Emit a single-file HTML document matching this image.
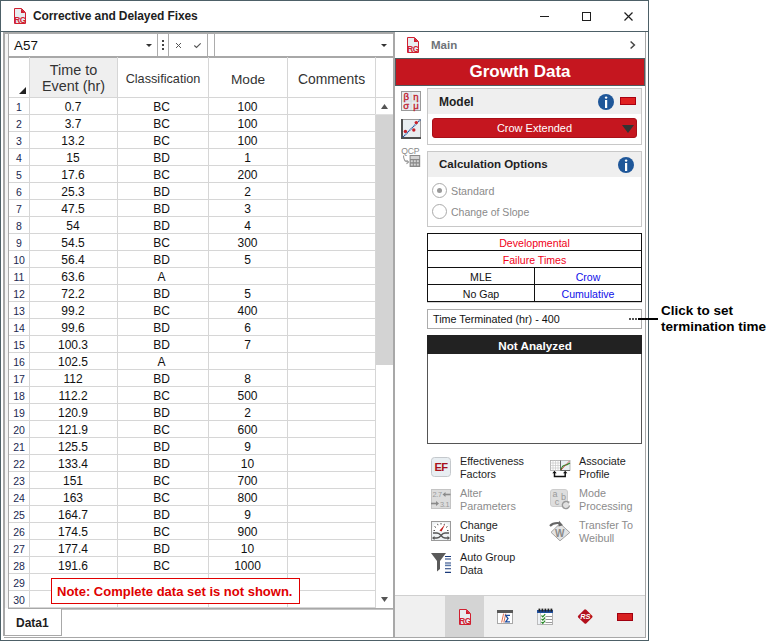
<!DOCTYPE html>
<html><head><meta charset="utf-8">
<style>
*{margin:0;padding:0;box-sizing:border-box}
html,body{width:770px;height:641px;overflow:hidden;background:#fff;font-family:"Liberation Sans",sans-serif;}
.a{position:absolute}
.t{position:absolute;white-space:nowrap;line-height:1}
.c{position:absolute;white-space:nowrap;line-height:1;text-align:center}
svg{position:absolute;overflow:visible}
</style></head><body>

<div class="a" style="left:0;top:0;width:649px;height:641px;border:1px solid #4d6067;background:#fff"></div>
<svg style="left:14px;top:8px" width="12" height="16" viewBox="0 0 12 16">
<path d="M0.5 0.5H7.5L11.5 4.5V15.5H0.5Z" fill="#e8edf0" stroke="#d02030" stroke-width="1"/>
<path d="M7 0.5V5H11.5Z" fill="#d02030"/>
<text x="6" y="15" font-family="Liberation Sans" font-size="8.4" font-weight="bold" fill="#d02030" text-anchor="middle" letter-spacing="-0.6">RG</text>
</svg>
<div class="t" style="left:33px;top:10px;font-size:12px;font-weight:bold;color:#1e1e1e;letter-spacing:-0.1px">Corrective and Delayed Fixes</div>
<div class="a" style="left:540px;top:16px;width:9px;height:1px;background:#1e1e1e"></div>
<div class="a" style="left:582px;top:12px;width:9px;height:9px;border:1px solid #1e1e1e"></div>
<svg style="left:624px;top:12px" width="9" height="9" viewBox="0 0 9 9"><path d="M0.5 0.5L8.5 8.5M8.5 0.5L0.5 8.5" stroke="#1e1e1e" stroke-width="1.2"/></svg>
<div class="a" style="left:0;top:31px;width:649px;height:1px;background:#4d6067"></div>
<div class="a" style="left:3px;top:32px;width:2px;height:604px;background:#a8a8a8"></div>
<div class="a" style="left:5px;top:32px;width:3px;height:576px;background:#f4f4f4"></div>
<div class="a" style="left:3px;top:32px;width:391px;height:2px;background:#a8a8a8"></div>
<div class="a" style="left:8px;top:33px;width:150px;height:24px;border:1px solid #acacac;background:#fff"></div>
<div class="t" style="left:14px;top:39px;font-size:13.4px;color:#111">A57</div>
<svg style="left:146px;top:44px" width="6" height="3" viewBox="0 0 6 3"><path d="M0 0H6L3 3Z" fill="#333"/></svg>
<div class="a" style="left:162px;top:40px;width:2px;height:2px;background:#444"></div>
<div class="a" style="left:162px;top:44px;width:2px;height:2px;background:#444"></div>
<div class="a" style="left:162px;top:48px;width:2px;height:2px;background:#444"></div>
<div class="a" style="left:168px;top:33px;width:40px;height:24px;border:1px solid #acacac;background:#fff"></div>
<svg style="left:176px;top:43px" width="5" height="5" viewBox="0 0 5 5"><path d="M0 0L5 5M5 0L0 5" stroke="#555" stroke-width="1"/></svg>
<svg style="left:194px;top:43px" width="7" height="5" viewBox="0 0 7 5"><path d="M0.3 2.5L2.5 4.5L6.7 0.3" fill="none" stroke="#555" stroke-width="1.1"/></svg>
<div class="a" style="left:214px;top:33px;width:181px;height:24px;border:1px solid #acacac;background:#fff"></div>
<svg style="left:381px;top:44px" width="6" height="3" viewBox="0 0 6 3"><path d="M0 0H6L3 3Z" fill="#333"/></svg>
<div class="a" style="left:8px;top:56px;width:387px;height:553px;border:1px solid #a8a8a8;border-top:2px solid #a8a8a8;border-right:2px solid #a8a8a8;border-bottom:1px solid #a8a8a8;background:#fff"></div>
<div class="a" style="left:30px;top:58px;width:87px;height:39px;background:#efefef"></div>
<div class="a" style="left:29px;top:57px;width:1px;height:551px;background:#d6d6d6"></div>
<div class="a" style="left:117px;top:57px;width:1px;height:551px;background:#d6d6d6"></div>
<div class="a" style="left:208px;top:57px;width:1px;height:551px;background:#d6d6d6"></div>
<div class="a" style="left:287px;top:57px;width:1px;height:551px;background:#d6d6d6"></div>
<div class="a" style="left:375px;top:57px;width:1px;height:551px;background:#d6d6d6"></div>
<div class="a" style="left:9px;top:97px;width:366px;height:1px;background:#d6d6d6"></div>
<div class="a" style="left:9px;top:114px;width:366px;height:1px;background:#d6d6d6"></div>
<div class="a" style="left:9px;top:131px;width:366px;height:1px;background:#d6d6d6"></div>
<div class="a" style="left:9px;top:148px;width:366px;height:1px;background:#d6d6d6"></div>
<div class="a" style="left:9px;top:165px;width:366px;height:1px;background:#d6d6d6"></div>
<div class="a" style="left:9px;top:182px;width:366px;height:1px;background:#d6d6d6"></div>
<div class="a" style="left:9px;top:199px;width:366px;height:1px;background:#d6d6d6"></div>
<div class="a" style="left:9px;top:216px;width:366px;height:1px;background:#d6d6d6"></div>
<div class="a" style="left:9px;top:233px;width:366px;height:1px;background:#d6d6d6"></div>
<div class="a" style="left:9px;top:250px;width:366px;height:1px;background:#d6d6d6"></div>
<div class="a" style="left:9px;top:267px;width:366px;height:1px;background:#d6d6d6"></div>
<div class="a" style="left:9px;top:284px;width:366px;height:1px;background:#d6d6d6"></div>
<div class="a" style="left:9px;top:301px;width:366px;height:1px;background:#d6d6d6"></div>
<div class="a" style="left:9px;top:318px;width:366px;height:1px;background:#d6d6d6"></div>
<div class="a" style="left:9px;top:335px;width:366px;height:1px;background:#d6d6d6"></div>
<div class="a" style="left:9px;top:352px;width:366px;height:1px;background:#d6d6d6"></div>
<div class="a" style="left:9px;top:369px;width:366px;height:1px;background:#d6d6d6"></div>
<div class="a" style="left:9px;top:386px;width:366px;height:1px;background:#d6d6d6"></div>
<div class="a" style="left:9px;top:403px;width:366px;height:1px;background:#d6d6d6"></div>
<div class="a" style="left:9px;top:420px;width:366px;height:1px;background:#d6d6d6"></div>
<div class="a" style="left:9px;top:437px;width:366px;height:1px;background:#d6d6d6"></div>
<div class="a" style="left:9px;top:454px;width:366px;height:1px;background:#d6d6d6"></div>
<div class="a" style="left:9px;top:471px;width:366px;height:1px;background:#d6d6d6"></div>
<div class="a" style="left:9px;top:488px;width:366px;height:1px;background:#d6d6d6"></div>
<div class="a" style="left:9px;top:505px;width:366px;height:1px;background:#d6d6d6"></div>
<div class="a" style="left:9px;top:522px;width:366px;height:1px;background:#d6d6d6"></div>
<div class="a" style="left:9px;top:539px;width:366px;height:1px;background:#d6d6d6"></div>
<div class="a" style="left:9px;top:556px;width:366px;height:1px;background:#d6d6d6"></div>
<div class="a" style="left:9px;top:573px;width:366px;height:1px;background:#d6d6d6"></div>
<div class="a" style="left:9px;top:590px;width:366px;height:1px;background:#d6d6d6"></div>
<div class="a" style="left:9px;top:607px;width:366px;height:1px;background:#d6d6d6"></div>
<div class="a" style="left:375px;top:97px;width:18px;height:1px;background:#d6d6d6"></div>
<div class="a" style="left:375px;top:114px;width:18px;height:1px;background:#e0e0e0"></div>
<svg style="left:19px;top:87px" width="7" height="7" viewBox="0 0 7 7"><path d="M7 0V7H0Z" fill="#222"/></svg>
<div class="c" style="left:30px;top:61.5px;width:87px;font-size:14.4px;line-height:16.5px;color:#333">Time to<br>Event (hr)</div>
<div class="c" style="left:118px;top:73px;width:90px;font-size:12.7px;color:#333">Classification</div>
<div class="c" style="left:209px;top:73px;width:78px;font-size:13.7px;color:#333">Mode</div>
<div class="c" style="left:288px;top:73px;width:87px;font-size:13.9px;color:#333">Comments</div>
<div class="c" style="left:9px;top:102px;width:20px;font-size:10.5px;color:#1a2850">1</div>
<div class="c" style="left:30px;top:101px;width:86px;font-size:12px;color:#111">0.7</div>
<div class="c" style="left:117px;top:101px;width:89px;font-size:12px;color:#111">BC</div>
<div class="c" style="left:209px;top:101px;width:77px;font-size:12px;color:#111">100</div>
<div class="c" style="left:9px;top:119px;width:20px;font-size:10.5px;color:#1a2850">2</div>
<div class="c" style="left:30px;top:118px;width:86px;font-size:12px;color:#111">3.7</div>
<div class="c" style="left:117px;top:118px;width:89px;font-size:12px;color:#111">BC</div>
<div class="c" style="left:209px;top:118px;width:77px;font-size:12px;color:#111">100</div>
<div class="c" style="left:9px;top:136px;width:20px;font-size:10.5px;color:#1a2850">3</div>
<div class="c" style="left:30px;top:135px;width:86px;font-size:12px;color:#111">13.2</div>
<div class="c" style="left:117px;top:135px;width:89px;font-size:12px;color:#111">BC</div>
<div class="c" style="left:209px;top:135px;width:77px;font-size:12px;color:#111">100</div>
<div class="c" style="left:9px;top:153px;width:20px;font-size:10.5px;color:#1a2850">4</div>
<div class="c" style="left:30px;top:152px;width:86px;font-size:12px;color:#111">15</div>
<div class="c" style="left:117px;top:152px;width:89px;font-size:12px;color:#111">BD</div>
<div class="c" style="left:209px;top:152px;width:77px;font-size:12px;color:#111">1</div>
<div class="c" style="left:9px;top:170px;width:20px;font-size:10.5px;color:#1a2850">5</div>
<div class="c" style="left:30px;top:169px;width:86px;font-size:12px;color:#111">17.6</div>
<div class="c" style="left:117px;top:169px;width:89px;font-size:12px;color:#111">BC</div>
<div class="c" style="left:209px;top:169px;width:77px;font-size:12px;color:#111">200</div>
<div class="c" style="left:9px;top:187px;width:20px;font-size:10.5px;color:#1a2850">6</div>
<div class="c" style="left:30px;top:186px;width:86px;font-size:12px;color:#111">25.3</div>
<div class="c" style="left:117px;top:186px;width:89px;font-size:12px;color:#111">BD</div>
<div class="c" style="left:209px;top:186px;width:77px;font-size:12px;color:#111">2</div>
<div class="c" style="left:9px;top:204px;width:20px;font-size:10.5px;color:#1a2850">7</div>
<div class="c" style="left:30px;top:203px;width:86px;font-size:12px;color:#111">47.5</div>
<div class="c" style="left:117px;top:203px;width:89px;font-size:12px;color:#111">BD</div>
<div class="c" style="left:209px;top:203px;width:77px;font-size:12px;color:#111">3</div>
<div class="c" style="left:9px;top:221px;width:20px;font-size:10.5px;color:#1a2850">8</div>
<div class="c" style="left:30px;top:220px;width:86px;font-size:12px;color:#111">54</div>
<div class="c" style="left:117px;top:220px;width:89px;font-size:12px;color:#111">BD</div>
<div class="c" style="left:209px;top:220px;width:77px;font-size:12px;color:#111">4</div>
<div class="c" style="left:9px;top:238px;width:20px;font-size:10.5px;color:#1a2850">9</div>
<div class="c" style="left:30px;top:237px;width:86px;font-size:12px;color:#111">54.5</div>
<div class="c" style="left:117px;top:237px;width:89px;font-size:12px;color:#111">BC</div>
<div class="c" style="left:209px;top:237px;width:77px;font-size:12px;color:#111">300</div>
<div class="c" style="left:9px;top:255px;width:20px;font-size:10.5px;color:#1a2850">10</div>
<div class="c" style="left:30px;top:254px;width:86px;font-size:12px;color:#111">56.4</div>
<div class="c" style="left:117px;top:254px;width:89px;font-size:12px;color:#111">BD</div>
<div class="c" style="left:209px;top:254px;width:77px;font-size:12px;color:#111">5</div>
<div class="c" style="left:9px;top:272px;width:20px;font-size:10.5px;color:#1a2850">11</div>
<div class="c" style="left:30px;top:271px;width:86px;font-size:12px;color:#111">63.6</div>
<div class="c" style="left:117px;top:271px;width:89px;font-size:12px;color:#111">A</div>
<div class="c" style="left:9px;top:289px;width:20px;font-size:10.5px;color:#1a2850">12</div>
<div class="c" style="left:30px;top:288px;width:86px;font-size:12px;color:#111">72.2</div>
<div class="c" style="left:117px;top:288px;width:89px;font-size:12px;color:#111">BD</div>
<div class="c" style="left:209px;top:288px;width:77px;font-size:12px;color:#111">5</div>
<div class="c" style="left:9px;top:306px;width:20px;font-size:10.5px;color:#1a2850">13</div>
<div class="c" style="left:30px;top:305px;width:86px;font-size:12px;color:#111">99.2</div>
<div class="c" style="left:117px;top:305px;width:89px;font-size:12px;color:#111">BC</div>
<div class="c" style="left:209px;top:305px;width:77px;font-size:12px;color:#111">400</div>
<div class="c" style="left:9px;top:323px;width:20px;font-size:10.5px;color:#1a2850">14</div>
<div class="c" style="left:30px;top:322px;width:86px;font-size:12px;color:#111">99.6</div>
<div class="c" style="left:117px;top:322px;width:89px;font-size:12px;color:#111">BD</div>
<div class="c" style="left:209px;top:322px;width:77px;font-size:12px;color:#111">6</div>
<div class="c" style="left:9px;top:340px;width:20px;font-size:10.5px;color:#1a2850">15</div>
<div class="c" style="left:30px;top:339px;width:86px;font-size:12px;color:#111">100.3</div>
<div class="c" style="left:117px;top:339px;width:89px;font-size:12px;color:#111">BD</div>
<div class="c" style="left:209px;top:339px;width:77px;font-size:12px;color:#111">7</div>
<div class="c" style="left:9px;top:357px;width:20px;font-size:10.5px;color:#1a2850">16</div>
<div class="c" style="left:30px;top:356px;width:86px;font-size:12px;color:#111">102.5</div>
<div class="c" style="left:117px;top:356px;width:89px;font-size:12px;color:#111">A</div>
<div class="c" style="left:9px;top:374px;width:20px;font-size:10.5px;color:#1a2850">17</div>
<div class="c" style="left:30px;top:373px;width:86px;font-size:12px;color:#111">112</div>
<div class="c" style="left:117px;top:373px;width:89px;font-size:12px;color:#111">BD</div>
<div class="c" style="left:209px;top:373px;width:77px;font-size:12px;color:#111">8</div>
<div class="c" style="left:9px;top:391px;width:20px;font-size:10.5px;color:#1a2850">18</div>
<div class="c" style="left:30px;top:390px;width:86px;font-size:12px;color:#111">112.2</div>
<div class="c" style="left:117px;top:390px;width:89px;font-size:12px;color:#111">BC</div>
<div class="c" style="left:209px;top:390px;width:77px;font-size:12px;color:#111">500</div>
<div class="c" style="left:9px;top:408px;width:20px;font-size:10.5px;color:#1a2850">19</div>
<div class="c" style="left:30px;top:407px;width:86px;font-size:12px;color:#111">120.9</div>
<div class="c" style="left:117px;top:407px;width:89px;font-size:12px;color:#111">BD</div>
<div class="c" style="left:209px;top:407px;width:77px;font-size:12px;color:#111">2</div>
<div class="c" style="left:9px;top:425px;width:20px;font-size:10.5px;color:#1a2850">20</div>
<div class="c" style="left:30px;top:424px;width:86px;font-size:12px;color:#111">121.9</div>
<div class="c" style="left:117px;top:424px;width:89px;font-size:12px;color:#111">BC</div>
<div class="c" style="left:209px;top:424px;width:77px;font-size:12px;color:#111">600</div>
<div class="c" style="left:9px;top:442px;width:20px;font-size:10.5px;color:#1a2850">21</div>
<div class="c" style="left:30px;top:441px;width:86px;font-size:12px;color:#111">125.5</div>
<div class="c" style="left:117px;top:441px;width:89px;font-size:12px;color:#111">BD</div>
<div class="c" style="left:209px;top:441px;width:77px;font-size:12px;color:#111">9</div>
<div class="c" style="left:9px;top:459px;width:20px;font-size:10.5px;color:#1a2850">22</div>
<div class="c" style="left:30px;top:458px;width:86px;font-size:12px;color:#111">133.4</div>
<div class="c" style="left:117px;top:458px;width:89px;font-size:12px;color:#111">BD</div>
<div class="c" style="left:209px;top:458px;width:77px;font-size:12px;color:#111">10</div>
<div class="c" style="left:9px;top:476px;width:20px;font-size:10.5px;color:#1a2850">23</div>
<div class="c" style="left:30px;top:475px;width:86px;font-size:12px;color:#111">151</div>
<div class="c" style="left:117px;top:475px;width:89px;font-size:12px;color:#111">BC</div>
<div class="c" style="left:209px;top:475px;width:77px;font-size:12px;color:#111">700</div>
<div class="c" style="left:9px;top:493px;width:20px;font-size:10.5px;color:#1a2850">24</div>
<div class="c" style="left:30px;top:492px;width:86px;font-size:12px;color:#111">163</div>
<div class="c" style="left:117px;top:492px;width:89px;font-size:12px;color:#111">BC</div>
<div class="c" style="left:209px;top:492px;width:77px;font-size:12px;color:#111">800</div>
<div class="c" style="left:9px;top:510px;width:20px;font-size:10.5px;color:#1a2850">25</div>
<div class="c" style="left:30px;top:509px;width:86px;font-size:12px;color:#111">164.7</div>
<div class="c" style="left:117px;top:509px;width:89px;font-size:12px;color:#111">BD</div>
<div class="c" style="left:209px;top:509px;width:77px;font-size:12px;color:#111">9</div>
<div class="c" style="left:9px;top:527px;width:20px;font-size:10.5px;color:#1a2850">26</div>
<div class="c" style="left:30px;top:526px;width:86px;font-size:12px;color:#111">174.5</div>
<div class="c" style="left:117px;top:526px;width:89px;font-size:12px;color:#111">BC</div>
<div class="c" style="left:209px;top:526px;width:77px;font-size:12px;color:#111">900</div>
<div class="c" style="left:9px;top:544px;width:20px;font-size:10.5px;color:#1a2850">27</div>
<div class="c" style="left:30px;top:543px;width:86px;font-size:12px;color:#111">177.4</div>
<div class="c" style="left:117px;top:543px;width:89px;font-size:12px;color:#111">BD</div>
<div class="c" style="left:209px;top:543px;width:77px;font-size:12px;color:#111">10</div>
<div class="c" style="left:9px;top:561px;width:20px;font-size:10.5px;color:#1a2850">28</div>
<div class="c" style="left:30px;top:560px;width:86px;font-size:12px;color:#111">191.6</div>
<div class="c" style="left:117px;top:560px;width:89px;font-size:12px;color:#111">BC</div>
<div class="c" style="left:209px;top:560px;width:77px;font-size:12px;color:#111">1000</div>
<div class="c" style="left:9px;top:578px;width:20px;font-size:10.5px;color:#1a2850">29</div>
<div class="c" style="left:9px;top:595px;width:20px;font-size:10.5px;color:#1a2850">30</div>
<div class="a" style="left:376px;top:115px;width:17px;height:250px;background:#d3d3d3"></div>
<svg style="left:381px;top:104px" width="7" height="5" viewBox="0 0 7 5"><path d="M0 5H7L3.5 0Z" fill="#555"/></svg>
<svg style="left:381px;top:597px" width="7" height="5" viewBox="0 0 7 5"><path d="M0 0H7L3.5 5Z" fill="#555"/></svg>
<div class="a" style="left:51px;top:578px;width:249px;height:26px;border:1px solid #e00000;background:#fff"></div>
<div class="t" style="left:57px;top:585px;font-size:13px;font-weight:bold;color:#e00000">Note: Complete data set is not shown.</div>
<div class="a" style="left:62px;top:609px;width:331px;height:1px;background:#c4c4c4"></div>
<div class="a" style="left:4px;top:609px;width:58px;height:27px;border:1px solid #a8a8a8;border-top:none;background:#fff"></div>
<div class="t" style="left:16px;top:616.5px;font-size:12px;font-weight:bold;color:#1e1e1e">Data1</div>
<div class="a" style="left:4px;top:637px;width:391px;height:1px;background:#a8a8a8"></div>
<div class="a" style="left:393px;top:32px;width:2px;height:605px;background:#a8a8a8"></div>
<div class="a" style="left:645px;top:32px;width:1px;height:606px;background:#a8a8a8"></div>
<svg style="left:407px;top:37px" width="12" height="16" viewBox="0 0 12 16">
<path d="M0.5 0.5H7.5L11.5 4.5V15.5H0.5Z" fill="#e8edf0" stroke="#d02030" stroke-width="1"/>
<path d="M7 0.5V5H11.5Z" fill="#d02030"/>
<text x="6" y="15" font-family="Liberation Sans" font-size="8.4" font-weight="bold" fill="#d02030" text-anchor="middle" letter-spacing="-0.6">RG</text>
</svg>
<div class="t" style="left:431px;top:40px;font-size:11.5px;font-weight:bold;color:#6e7378">Main</div>
<svg style="left:630px;top:41px" width="5" height="8" viewBox="0 0 5 8"><path d="M0.6 0.5L4.4 4L0.6 7.5" fill="none" stroke="#444" stroke-width="1.5"/></svg>
<div class="a" style="left:395px;top:58px;width:250px;height:28px;background:#c5161f;border:1px solid #505a5e"></div>
<div class="c" style="left:395px;top:63px;width:250px;font-size:17px;font-weight:bold;color:#fff">Growth Data</div>
<div class="a" style="left:427px;top:88px;width:215px;height:57px;border:1px solid #c8c8c8;background:#fff"></div>
<div class="a" style="left:428px;top:89px;width:213px;height:25px;background:#efefef"></div>
<div class="t" style="left:439px;top:96px;font-size:12px;font-weight:bold;color:#1e1e1e">Model</div>
<svg style="left:598px;top:94px" width="16" height="16" viewBox="0 0 16 16"><circle cx="8" cy="8" r="8" fill="#1f5799"/><rect x="7" y="6" width="2.2" height="8" fill="#fff"/><circle cx="8.1" cy="3.6" r="1.2" fill="#fff"/></svg>
<div class="a" style="left:620px;top:97px;width:16px;height:8px;background:#e02020;border:1px solid #a80010"></div>
<div class="a" style="left:432px;top:118px;width:205px;height:20px;background:#c5161f;border-radius:3px;border:1px solid #a81018"></div>
<div class="c" style="left:432px;top:123px;width:205px;font-size:11px;color:#fff">Crow Extended</div>
<svg style="left:622px;top:125px" width="12" height="8" viewBox="0 0 12 8"><path d="M0 0H12L6 8Z" fill="#333"/></svg>
<div class="a" style="left:427px;top:151px;width:215px;height:76px;border:1px solid #c8c8c8;background:#fff"></div>
<div class="a" style="left:428px;top:152px;width:213px;height:25px;background:#efefef"></div>
<div class="t" style="left:439px;top:159px;font-size:11.5px;font-weight:bold;color:#1e1e1e">Calculation Options</div>
<svg style="left:618px;top:157px" width="16" height="16" viewBox="0 0 16 16"><circle cx="8" cy="8" r="8" fill="#1f5799"/><rect x="7" y="6" width="2.2" height="8" fill="#fff"/><circle cx="8.1" cy="3.6" r="1.2" fill="#fff"/></svg>
<svg style="left:432px;top:183px" width="16" height="16" viewBox="0 0 16 16"><circle cx="7.5" cy="7.5" r="7" fill="#fff" stroke="#aaa"/><circle cx="7.5" cy="7.5" r="2.5" fill="#999"/></svg>
<div class="t" style="left:451px;top:186px;font-size:10.7px;color:#8a8a8a">Standard</div>
<svg style="left:432px;top:204px" width="16" height="16" viewBox="0 0 16 16"><circle cx="7.5" cy="7.5" r="7" fill="#fff" stroke="#aaa"/></svg>
<div class="t" style="left:451px;top:207px;font-size:10.5px;color:#8a8a8a">Change of Slope</div>
<svg style="left:401px;top:91px" width="20" height="20" viewBox="0 0 20 20">
<rect x="0.5" y="0.5" width="19" height="19" fill="#e9edf0" stroke="#9a9a9a"/>
<path d="M10 1V19M1 10H19" stroke="#d6dadd"/>
<text x="5.2" y="8.6" font-family="Liberation Sans" font-size="9.6" fill="#c0202e" stroke="#c0202e" stroke-width="0.35" text-anchor="middle">β</text>
<text x="15" y="8.6" font-family="Liberation Sans" font-size="9.6" fill="#c0202e" stroke="#c0202e" stroke-width="0.35" text-anchor="middle">η</text>
<text x="5.2" y="17.6" font-family="Liberation Sans" font-size="9.6" fill="#c0202e" stroke="#c0202e" stroke-width="0.35" text-anchor="middle">σ</text>
<text x="15" y="17.6" font-family="Liberation Sans" font-size="9.6" fill="#c0202e" stroke="#c0202e" stroke-width="0.35" text-anchor="middle">μ</text>
</svg>
<svg style="left:401px;top:119px" width="20" height="20" viewBox="0 0 20 20">
<rect x="0.5" y="0.5" width="19" height="19" fill="#e9edf0" stroke="#9a9a9a"/>
<path d="M1 0V19H20" fill="none" stroke="#505050" stroke-width="2"/>
<path d="M2 18L19.5 0.5" stroke="#1f4f9f" stroke-width="1.3" stroke-dasharray="1.2 0.6"/>
<circle cx="4.4" cy="12.4" r="1.7" fill="#c8202a"/><circle cx="12.8" cy="11" r="1.7" fill="#c8202a"/><circle cx="15.3" cy="3.6" r="1.7" fill="#c8202a"/>
</svg>
<svg style="left:401px;top:146px" width="21" height="22" viewBox="0 0 21 22">
<text x="9.3" y="7.6" font-family="Liberation Sans" font-size="8.6" fill="#888" text-anchor="middle" letter-spacing="-0.2">QCP</text>
<path d="M2.5 9.5Q2.5 15.5 7 16" fill="none" stroke="#9a9a9a" stroke-width="1.1"/><path d="M5.5 14.2L7.6 16L5.5 17.8" fill="none" stroke="#9a9a9a" stroke-width="1.1"/>
<rect x="8.6" y="9" width="10.6" height="12" fill="#8a8a8a"/>
<rect x="9.6" y="10" width="8.6" height="3" fill="#d4d4d4"/>
<rect x="9.8" y="14.2" width="2" height="2" fill="#d4d4d4"/><rect x="12.8" y="14.2" width="2" height="2" fill="#d4d4d4"/><rect x="15.8" y="14.2" width="2" height="2" fill="#d4d4d4"/>
<rect x="9.8" y="17.6" width="2" height="2" fill="#d4d4d4"/><rect x="12.8" y="17.6" width="2" height="2" fill="#d4d4d4"/><rect x="15.8" y="17.6" width="2" height="2" fill="#d4d4d4"/>
</svg>
<div class="a" style="left:427px;top:233px;width:215px;height:69px;border:1px solid #111;background:#fff"></div>
<div class="a" style="left:427px;top:302px;width:215px;height:1px;background:#d4d4d4"></div>
<div class="a" style="left:428px;top:250px;width:213px;height:1px;background:#111"></div>
<div class="a" style="left:428px;top:267px;width:213px;height:1px;background:#111"></div>
<div class="a" style="left:428px;top:284px;width:213px;height:1px;background:#111"></div>
<div class="a" style="left:534px;top:267px;width:1px;height:34px;background:#111"></div>
<div class="c" style="left:428px;top:238px;width:213px;font-size:10.6px;color:#f00018">Developmental</div>
<div class="c" style="left:428px;top:255px;width:213px;font-size:10.6px;color:#f00018">Failure Times</div>
<div class="c" style="left:428px;top:272px;width:106px;font-size:10.6px;color:#111">MLE</div>
<div class="c" style="left:535px;top:272px;width:106px;font-size:10.6px;color:#1010e8">Crow</div>
<div class="c" style="left:428px;top:289px;width:106px;font-size:10.6px;color:#111">No Gap</div>
<div class="c" style="left:535px;top:289px;width:106px;font-size:10.6px;color:#1010e8">Cumulative</div>
<div class="a" style="left:427px;top:309px;width:215px;height:20px;border:1px solid #acacac;background:#fff"></div>
<div class="t" style="left:433px;top:314px;font-size:10.75px;color:#111">Time Terminated (hr) - 400</div>
<div class="a" style="left:629px;top:318px;width:2px;height:2px;background:#555"></div>
<div class="a" style="left:632px;top:318px;width:2px;height:2px;background:#555"></div>
<div class="a" style="left:635px;top:318px;width:2px;height:2px;background:#555"></div>
<div class="a" style="left:638px;top:318px;width:20px;height:2px;background:#000"></div>
<div class="t" style="left:661px;top:303px;font-size:13.5px;line-height:16px;font-weight:bold;color:#000">Click to set<br>termination time</div>
<div class="a" style="left:427px;top:335px;width:215px;height:109px;border:1px solid #555;background:#fff"></div>
<div class="a" style="left:427px;top:335px;width:215px;height:19px;background:#222"></div>
<div class="c" style="left:427px;top:340px;width:216px;font-size:11.7px;font-weight:bold;color:#fff">Not Analyzed</div>
<div class="t" style="left:460px;top:455px;font-size:10.8px;line-height:13px;color:#1e1e1e">Effectiveness<br>Factors</div>
<div class="t" style="left:579px;top:455px;font-size:10.8px;line-height:13px;color:#1e1e1e">Associate<br>Profile</div>
<div class="t" style="left:460px;top:487px;font-size:10.8px;line-height:13px;color:#8c8c8c">Alter<br>Parameters</div>
<div class="t" style="left:579px;top:487px;font-size:10.8px;line-height:13px;color:#8c8c8c">Mode<br>Processing</div>
<div class="t" style="left:460px;top:519px;font-size:10.8px;line-height:13px;color:#1e1e1e">Change<br>Units</div>
<div class="t" style="left:579px;top:519px;font-size:10.8px;line-height:13px;color:#8c8c8c">Transfer To<br>Weibull</div>
<div class="t" style="left:460px;top:551px;font-size:10.8px;line-height:13px;color:#1e1e1e">Auto Group<br>Data</div>
<svg style="left:431px;top:457px" width="20" height="20" viewBox="0 0 20 20"><rect x="0.5" y="0.5" width="19" height="19" rx="3" fill="#e8eef2" stroke="#c4c8cc"/><text x="10" y="14.3" font-family="Liberation Sans" font-size="11.2" font-weight="bold" fill="#a8101a" text-anchor="middle" letter-spacing="-0.6">EF</text></svg>
<svg style="left:431px;top:489px" width="20" height="20" viewBox="0 0 20 20"><rect x="0.5" y="0.5" width="19" height="19" fill="#dcdcdc" stroke="#c4c4c4"/><text x="1.5" y="8" font-family="Liberation Sans" font-size="7.4" fill="#9a9a9a" letter-spacing="-0.3">2.7</text><text x="9" y="17.5" font-family="Liberation Sans" font-size="7.4" fill="#9a9a9a" letter-spacing="-0.3">3.1</text><path d="M13 5.5H19.5" stroke="#8a8a8a" stroke-width="1.6"/><path d="M11.5 5.5L14.5 3V8Z" fill="#8a8a8a"/><path d="M0 14.5H6" stroke="#8a8a8a" stroke-width="1.6"/><path d="M8 14.5L5 12V17Z" fill="#8a8a8a"/></svg>
<svg style="left:431px;top:521px" width="20" height="20" viewBox="0 0 20 20"><rect x="0.5" y="0.5" width="19" height="19" fill="#eef2f4" stroke="#9a9a9a"/>
<path d="M1 10.5Q1 1.5 10 1.5Q19 1.5 19 10.5Z" fill="#fff"/>
<path d="M2.5 9.5H4M3.5 5.5L5 6.5M6.5 2.8L7 4.2M10 2V3.5M13.5 2.8L13 4.2M16.5 5.5L15 6.5M16 9.5H17.5" stroke="#555" stroke-width="1"/>
<path d="M8.5 9.5L14 3.5L10.5 10.5Z" fill="#c01818"/>
<path d="M2 12H6Q8 12 10 14.5Q12 17 14 17H18M2 17H6Q8 17 10 14.5Q12 12 14 12H18" fill="none" stroke="#555" stroke-width="1.3"/>
<path d="M1 17L3.5 15V19Z M19 17L16.5 15V19Z" fill="#555"/></svg>
<svg style="left:431px;top:553px" width="21" height="21" viewBox="0 0 21 21"><path d="M0 0H15L9 8V16L6 18.5V8Z" fill="#5a5a5a"/>
<path d="M14 3.5H20M14 6H20M14 10H20M14 15.8H20M14 19.4H20" stroke="#1a3a7a" stroke-width="1.1"/><path d="M14 12.4H20" stroke="#5a78a8" stroke-width="1.6"/></svg>
<svg style="left:550px;top:460px" width="21" height="18" viewBox="0 0 21 18">
<rect x="0.5" y="0.5" width="10" height="10" fill="#fff" stroke="#aaa" stroke-width="0.8"/>
<path d="M0.5 3H10.5M0.5 5.5H10.5M0.5 8H10.5M3 0.5V10.5M5.5 0.5V10.5M8 0.5V10.5" stroke="#c8c8c8" stroke-width="0.7"/>
<rect x="10.5" y="0.5" width="9.5" height="10" fill="#e8eef2" stroke="#aaa" stroke-width="0.8"/>
<path d="M10.5 0.5V10.5H20" fill="none" stroke="#666" stroke-width="1"/>
<path d="M11 10Q12 6 14 5.5Q17 5 20 3" fill="none" stroke="#2a8a2a" stroke-width="1.1"/>
<path d="M11 10L19.5 1" stroke="#d02020" stroke-width="1" stroke-dasharray="1 0.5"/>
<path d="M4.5 12V16.5H15.2V12" fill="none" stroke="#111" stroke-width="1.5"/>
<path d="M2.3 13.3L4.5 10.8L6.7 13.3Z M13 13.3L15.2 10.8L17.4 13.3Z" fill="#111"/>
</svg>
<svg style="left:550px;top:489px" width="21" height="21" viewBox="0 0 21 21"><rect x="0.5" y="0.5" width="17" height="17" rx="2.5" fill="#dedede" stroke="#cdcdcd"/>
<text x="2.5" y="8" font-family="Liberation Sans" font-size="9" fill="#999">a</text>
<text x="11" y="11" font-family="Liberation Sans" font-size="9" fill="#999">b</text>
<text x="4.8" y="16" font-family="Liberation Sans" font-size="9" fill="#999">c</text>
<path d="M19.5 16.5A3.6 3.6 0 1 1 18.5 13.5" fill="#e0e0e0" stroke="#999" stroke-width="1.4"/><path d="M17 12.2L19.6 12.4L19 15Z" fill="#999"/></svg>
<svg style="left:550px;top:520px" width="21" height="22" viewBox="0 0 21 22"><path d="M10 3.5L19.8 12.5L10 20.8L1 12.3Z" fill="#e4e4e4" stroke="#9a9a9a" stroke-width="0.9" stroke-linejoin="round"/>
<text x="9.8" y="16.6" font-family="Liberation Sans" font-size="10" font-weight="bold" fill="#8a8a8a" text-anchor="middle">W</text>
<path d="M0 6Q3 2.5 9.5 3.2" fill="none" stroke="#666" stroke-width="2"/><path d="M9 0.8L13 5.2L8.5 6.5Z" fill="#666"/></svg>
<div class="a" style="left:395px;top:595px;width:250px;height:1px;background:#d0d0d0"></div>
<div class="a" style="left:395px;top:596px;width:250px;height:41px;background:#f0f0f0"></div>
<div class="a" style="left:445px;top:596px;width:39px;height:41px;background:#d4d4d4"></div>
<svg style="left:459px;top:609px" width="12" height="16" viewBox="0 0 12 16">
<path d="M0.5 0.5H7.5L11.5 4.5V15.5H0.5Z" fill="#e8edf0" stroke="#d02030" stroke-width="1"/>
<path d="M7 0.5V5H11.5Z" fill="#d02030"/>
<text x="6" y="15" font-family="Liberation Sans" font-size="8.4" font-weight="bold" fill="#d02030" text-anchor="middle" letter-spacing="-0.6">RG</text>
</svg>
<svg style="left:497px;top:610px" width="16" height="14" viewBox="0 0 16 14"><rect x="0.5" y="0.5" width="15" height="13" fill="#fff" stroke="#a8a8a8"/><rect x="0" y="0" width="16" height="3" fill="#585858"/>
<path d="M4.6 12.5L6.6 3.6M6.8 12.5L8.8 3.6" stroke="#e07050" stroke-width="1"/>
<path d="M13 5.3H8.7L11 8.6L8.7 11.8H13" fill="none" stroke="#1f4f9f" stroke-width="1.3"/></svg>
<svg style="left:537px;top:608px" width="16" height="17" viewBox="0 0 16 17"><rect x="0.5" y="4.5" width="15" height="12" fill="#fff" stroke="#b0b0b0"/><rect x="0.5" y="4.5" width="3" height="12" fill="#eef2f6" stroke="#b8b8b8" stroke-width="0.8"/>
<rect x="0" y="2" width="16" height="3" fill="#1f4f9f"/>
<rect x="1.5" y="0.6" width="1.8" height="3" fill="#222"/><rect x="4.5" y="0.6" width="1.8" height="3" fill="#222"/><rect x="7.5" y="0.6" width="1.8" height="3" fill="#222"/><rect x="10.5" y="0.6" width="1.8" height="3" fill="#222"/><rect x="13.5" y="0.6" width="1.8" height="3" fill="#222"/>
<path d="M4.5 7.5L5.8 8.8L8.2 6.2M4.5 10.8L5.8 12.1L8.2 9.5M4.5 14L5.8 15.3L8.2 12.7" fill="none" stroke="#2a8a2a" stroke-width="1.2"/>
<path d="M8.5 8.5H15M8.5 11.5H15M8.5 14.5H15" stroke="#999" stroke-width="1.2"/></svg>
<svg style="left:576px;top:608px" width="18" height="18" viewBox="0 0 18 18"><path d="M9 1.2Q9.6 1.2 10.2 1.8L16.2 7.8Q17 8.6 16.2 9.4L10.2 15.4Q9.4 16.2 8.6 15.4L2.2 9.4Q1.4 8.6 2.2 7.8L8.2 1.8Q8.6 1.2 9 1.2Z" fill="#b3101c"/><text x="9.2" y="11.4" font-family="Liberation Sans" font-size="7.4" font-weight="bold" font-style="italic" fill="#fff" text-anchor="middle" letter-spacing="-0.3">RS</text></svg>
<div class="a" style="left:617px;top:613px;width:16px;height:8px;background:#d82020;border:1px solid #a00010"></div>
<div class="a" style="left:395px;top:637px;width:251px;height:1px;background:#a8a8a8"></div>
</body></html>
